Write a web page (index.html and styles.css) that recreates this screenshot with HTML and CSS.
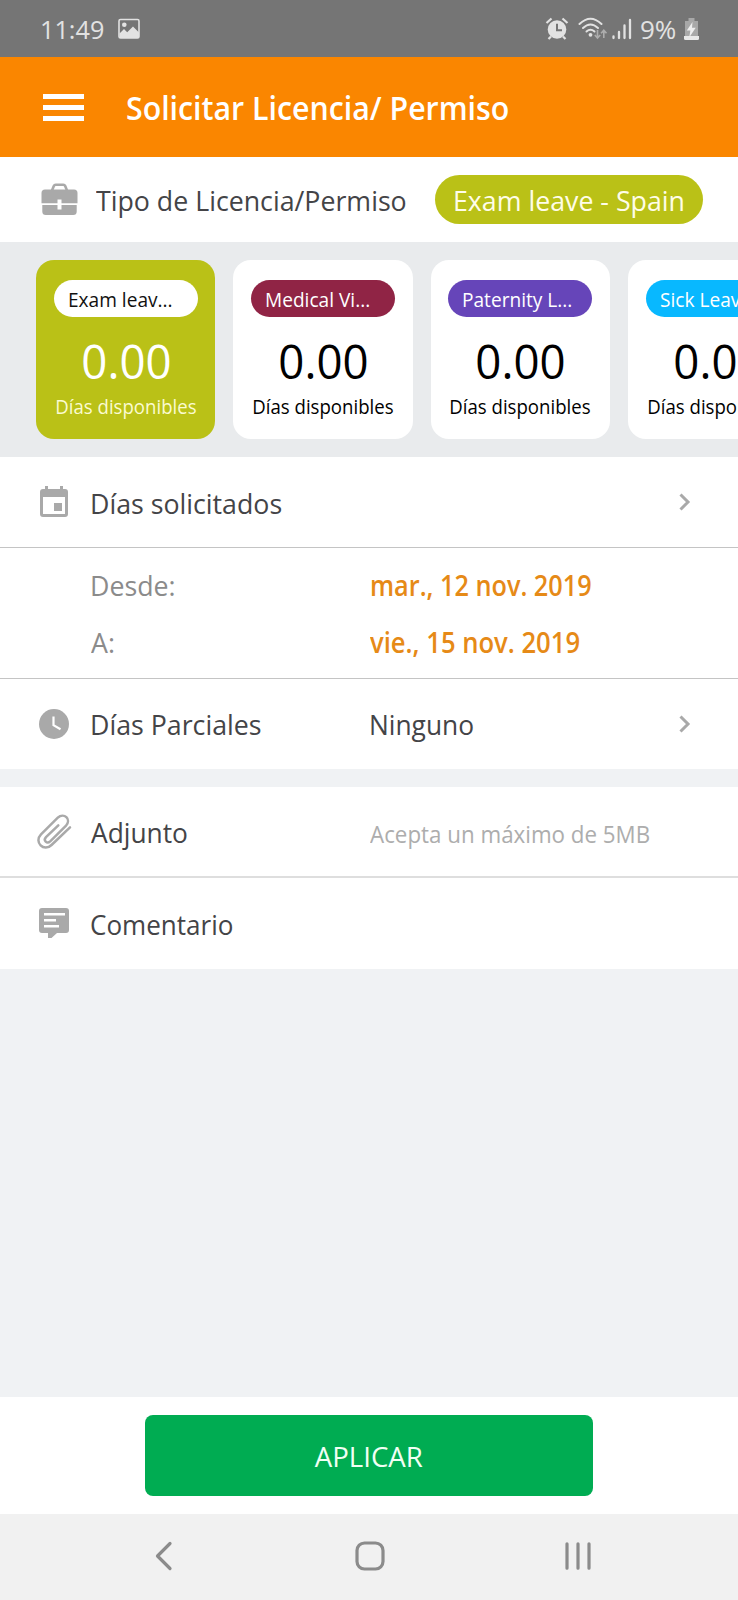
FILE: index.html
```
<!DOCTYPE html>
<html lang="es">
<head>
<meta charset="utf-8">
<title>Solicitar Licencia/ Permiso</title>
<link rel="stylesheet" href="styles.css">
</head>
<body>
<div class="screen">
  <div class="status">
    <span class="t clock">11:49</span>
    <svg class="i-photo" width="22" height="22" viewBox="0 0 22 22"><rect x="1" y="1.500" width="20" height="18.500" rx="1.500" fill="none" stroke="#e2e2e2" stroke-width="1.600"/><circle cx="6.300" cy="6.800" r="2.300" fill="#e2e2e2"/><path d="M1.500 15.500L6 11l3.200 3.200L15 8.500l6 6V20H1.500z" fill="#e2e2e2"/></svg>
    <span class="grow"></span>
    <svg class="i-alarm" width="24" height="24" viewBox="0 0 24 24"><circle cx="12" cy="12.500" r="9.300" fill="#e2e2e2"/><path d="M1.500 6L6.500 1.500M22.500 6l-5-4.500M6 19.500L3.500 22M18 19.500l2.500 2.500" stroke="#e2e2e2" stroke-width="2.200" fill="none"/><path d="M12 6.800v6.400h5" stroke="#757575" stroke-width="2" fill="none"/></svg>
    <svg class="i-wifi" width="30" height="24" viewBox="0 0 30 24"><g fill="none" stroke="#e2e2e2" stroke-width="2" stroke-linecap="round"><path d="M1.500 7Q12.500-3.500 23.500 7"/><path d="M5 11q7.500-7 15 0"/><path d="M8.500 14.500q4-3.500 8 0"/></g><circle cx="12.500" cy="17.800" r="1.900" fill="#e2e2e2"/><g fill="none" stroke="#adadad" stroke-width="1.600"><path d="M19.500 13v7.500M16.800 18l2.700 3 2.700-3M25.800 21v-7.500M23.100 16.200l2.700-3 2.700 3"/></g></svg>
    <svg class="i-signal" width="20" height="22" viewBox="0 0 20 22"><path d="M1.500 18.500v1.500M7 14v6M12.500 7.500V20M18 2v18" stroke="#e2e2e2" stroke-width="2.300" stroke-linecap="round"/></svg>
    <span class="t percent">9%</span>
    <svg class="i-batt" width="15" height="24" viewBox="0 0 15 24"><path d="M4.500 1h6v3H14v18.500H1V4h3.500z" fill="#a8a8a8"/><path d="M0 19h15v2.500a1.500 1.500 0 0 1-1.500 1.500h-12A1.500 1.500 0 0 1 0 21.500z" fill="#e8e8e8"/><path d="M8.500 5L2.800 13.500h3.600L5.200 20.500l6.500-9.700H8z" fill="#eee"/></svg>
  </div>

  <header class="appbar">
    <span class="burger"><i></i><i></i><i></i></span>
    <span class="t title">Solicitar Licencia/ Permiso</span>
  </header>

  <section class="type">
    <svg class="i-case" width="37" height="33" viewBox="0 0 37 33"><path d="M11 7.500l1.800-4.400Q13.300 1.700 14.700 1.700h7.600q1.400 0 1.900 1.400L26 7.500" fill="none" stroke="#a9a9a9" stroke-width="2.600"/><path d="M4 6.500h29a3.500 3.500 0 0 1 3.500 3.500v10.300H20.500v-3.800h-4v3.800H.5V10A3.500 3.500 0 0 1 4 6.500zM1.300 22h15.200v4.500h4V22h15.200v6.500a3.500 3.500 0 0 1-3.500 3.500H4.800a3.500 3.500 0 0 1-3.500-3.500z" fill="#a9a9a9"/></svg>
    <span class="t type-label">Tipo de Licencia/Permiso</span>
    <span class="chip"><span class="t">Exam leave - Spain</span></span>
  </section>

  <section class="cards">
    <article class="card active"><span class="tag"><span class="t">Exam leav...</span></span><span class="t num">0.00</span><span class="t cap">Días disponibles</span></article>
    <article class="card"><span class="tag wine"><span class="t">Medical Vi...</span></span><span class="t num">0.00</span><span class="t cap">Días disponibles</span></article>
    <article class="card"><span class="tag violet"><span class="t">Paternity L...</span></span><span class="t num">0.00</span><span class="t cap">Días disponibles</span></article>
    <article class="card"><span class="tag sky"><span class="t">Sick Leave...</span></span><span class="t num">0.00</span><span class="t cap">Días disponibles</span></article>
  </section>

  <section class="row">
    <span class="ico raised"><svg width="28" height="31" viewBox="0 0 28 31"><path fill-rule="evenodd" d="M5 0h3v3h12V0h3v3h2a3 3 0 0 1 3 3v22a3 3 0 0 1-3 3H3a3 3 0 0 1-3-3V6a3 3 0 0 1 3-3h2zM3 11v17h22V11zM14 17h8v8h-8z" fill="#a9a9a9"/></svg></span>
    <span class="t lower">Días solicitados</span><span></span>
    <svg class="chev" width="12" height="18" viewBox="0 0 12 18"><path d="M1.500 1.500L9 9l-7.500 7.500" fill="none" stroke="#a9a9a9" stroke-width="3"/></svg>
  </section>

  <section class="dates">
    <span></span><span class="t muted">Desde:</span><span class="t date">mar., 12 nov. 2019</span>
    <span></span><span class="t muted flat">A:</span><span class="t date second">vie., 15 nov. 2019</span>
  </section>

  <section class="row partial">
    <span class="ico"><svg width="30" height="30" viewBox="0 0 30 30"><circle cx="15" cy="15" r="15" fill="#a9a9a9"/><path d="M14.500 7.500v8.700l7 4" fill="none" stroke="#fff" stroke-width="2.200"/></svg></span>
    <span class="t">Días Parciales</span><span class="t none">Ninguno</span>
    <svg class="chev" width="12" height="18" viewBox="0 0 12 18"><path d="M1.500 1.500L9 9l-7.500 7.500" fill="none" stroke="#a9a9a9" stroke-width="3"/></svg>
  </section>

  <section class="row attach">
    <span class="ico raised"><svg width="36" height="38" viewBox="0 0 36 38"><path d="M22.300 13.300L10 25.200c-3.200 3.500 1 7 4.200 4.200L29.800 14c6.200-6.800-2-14-8-8.300L5 22.300c-7.500 7.800 3 18.200 10.500 10.700L34 15.300" fill="none" stroke="#a9a9a9" stroke-width="2.500" stroke-linecap="round"/></svg></span>
    <span class="t flat">Adjunto</span><span class="t hint">Acepta un máximo de 5MB</span>
  </section>

  <section class="row comment">
    <span class="ico raised"><svg width="30" height="30" viewBox="0 0 30 30"><path d="M3 0h24a3 3 0 0 1 3 3v19a3 3 0 0 1-3 3H18l-5.500 5H9v-5H3a3 3 0 0 1-3-3V3a3 3 0 0 1 3-3z" fill="#a9a9a9"/><path d="M5 6.200h21M5 12.200h12M5 18.200h15" stroke="#fff" stroke-width="2.600"/></svg></span>
    <span class="t narrow">Comentario</span>
  </section>

  <div class="grow"></div>

  <footer class="actions"><button class="apply"><span class="t">APLICAR</span></button></footer>
  <nav class="nav">
    <svg width="18" height="30" viewBox="0 0 18 30"><path d="M15 2.500L2.500 15 15 27.500" fill="none" stroke="#8b8b8b" stroke-width="3.200" stroke-linecap="round" stroke-linejoin="round"/></svg>
    <svg class="home" width="30" height="30" viewBox="0 0 30 30"><rect x="2" y="2" width="26" height="26" rx="7.500" fill="none" stroke="#8b8b8b" stroke-width="3.200"/></svg>
    <svg class="recents" width="28" height="30" viewBox="0 0 28 30"><path d="M3 2.800v24.400M14 2.800v24.400M25 2.800v24.400" stroke="#8b8b8b" stroke-width="3.200" stroke-linecap="round"/></svg>
  </nav>
</div>
</body>
</html>
```
FILE: styles.css
```
* { box-sizing: border-box; }
body {
  margin: 0;
  font-family: "Open Sans", "Noto Sans", sans-serif;
  font-size: 28px;
  color: #444447;
}
svg { display: block; flex: none; }
.screen {
  width: 738px;
  height: 1600px;
  display: flex;
  flex-direction: column;
  background: #f0f2f4;
  overflow: hidden;
}
.grow { flex: 1; }

/* Slightly condensed text */
.t {
  --w: .955;
  display: inline-block;
  justify-self: start;
  white-space: nowrap;
  transform: scaleX(var(--w));
  transform-origin: left center;
}

.status {
  height: 57px;
  display: flex;
  align-items: center;
  padding: 0 39px 0 40px;
  background: #757575;
  color: #e2e2e2;
  font-size: 26px;
}
.clock { width: 78px; --w: .97; }
.i-alarm { margin-right: 9px; }
.i-wifi { margin-right: 4px; }
.i-signal { margin-right: 8px; }
.percent { width: 44px; --w: 1; }

.appbar {
  height: 100px;
  display: flex;
  align-items: center;
  padding-left: 43px;
  background: #fa8600;
  color: #fff;
}
.burger { width: 41px; display: grid; gap: 6px; margin-right: 42px; }
.burger i { height: 5px; background: #fff; }
.title { font-size: 32px; font-weight: 600; --w: .947; }

.type {
  height: 85px;
  display: flex;
  align-items: center;
  padding-left: 41px;
  background: #fff;
}
.type-label { width: 338px; margin-left: 18px; }
.i-case { width: 37px; margin-bottom: 1px; }
.chip {
  width: 268px;
  height: 49px;
  margin-left: 1px;
  padding-left: 18px;
  display: flex;
  align-items: center;
  border-radius: 25px;
  background: #bac117;
  color: #fffde8;
}

.cards {
  height: 215px;
  display: flex;
  gap: 18px;
  padding: 18px 0 0 36px;
  background: #e9ebed;
}
.card {
  flex: none;
  width: 179.300px;
  height: 179px;
  display: flex;
  flex-direction: column;
  align-items: center;
  padding-top: 20px;
  border-radius: 18px;
  background: #fff;
  color: #000;
  font-size: 20px;
}
.card .t { transform-origin: center; }
.tag {
  width: 144px;
  height: 37px;
  padding-left: 14px;
  border-radius: 19px;
  line-height: 39px;
  color: #fff;
}
.card .tag .t { transform-origin: left center; --w: .955; }
.num { margin: 14px 0 0 1px; font-size: 48px; line-height: 60px; --w: .95; }
.cap { margin-top: 2px; line-height: 28px; --w: .93; }
.active { background: #bac117; color: #fff; }
.active .tag { background: #fff; color: #111; }
.active .cap { color: #fbfbd0; }
.wine { background: #902445; }
.violet { background: #6645b9; }
.sky { background: #08b8ff; }

.row, .dates {
  flex: none;
  display: grid;
  grid-template-columns: 54px 280px 1fr auto;
  align-items: center;
  padding: 0 47px 0 36px;
  background: #fff;
}
.row { height: 90px; }
.ico { width: 36px; display: flex; justify-content: center; }
.raised { padding-bottom: 2px; }
.lower { padding-top: 1px; }
.flat { margin-left: 1px; }
.row .flat { --w: .94; }
.narrow { --w: .93; }
.none { margin-left: -1px; --w: .94; }
.dates {
  height: 132px;
  grid-template-columns: 54px 280px 1fr;
  grid-template-rows: 57px 57px;
  padding-top: 8px;
  border: solid #c4c4c4;
  border-width: 1px 0;
}
.muted { color: #8b8b8b; }
.date { color: #e68a17; font-weight: 600; --w: .902; }
.second { --w: .915; }
.attach { height: 91px; margin-top: 18px; border-bottom: 2px solid #dedede; }
.hint { color: #adadad; font-size: 24.500px; line-height: 30px; padding-top: 5px; --w: .912; }
.comment { height: 91px; }

.actions {
  flex: none;
  height: 117px;
  padding-top: 18px;
  background: #fff;
}
.apply {
  display: block;
  width: 448px;
  height: 81px;
  margin: 0 auto;
  padding: 1px 0 0;
  border: 0;
  border-radius: 8px;
  background: #00ac52;
  color: #f0fff4;
  font: inherit;
}
.apply .t { transform-origin: center; --w: .985; }
.nav {
  flex: none;
  height: 86px;
  display: flex;
  align-items: center;
  padding: 0 146px 3px 155px;
  justify-content: space-between;
  background: #f1f1f1;
}
.home { margin-left: 3px; }
```
